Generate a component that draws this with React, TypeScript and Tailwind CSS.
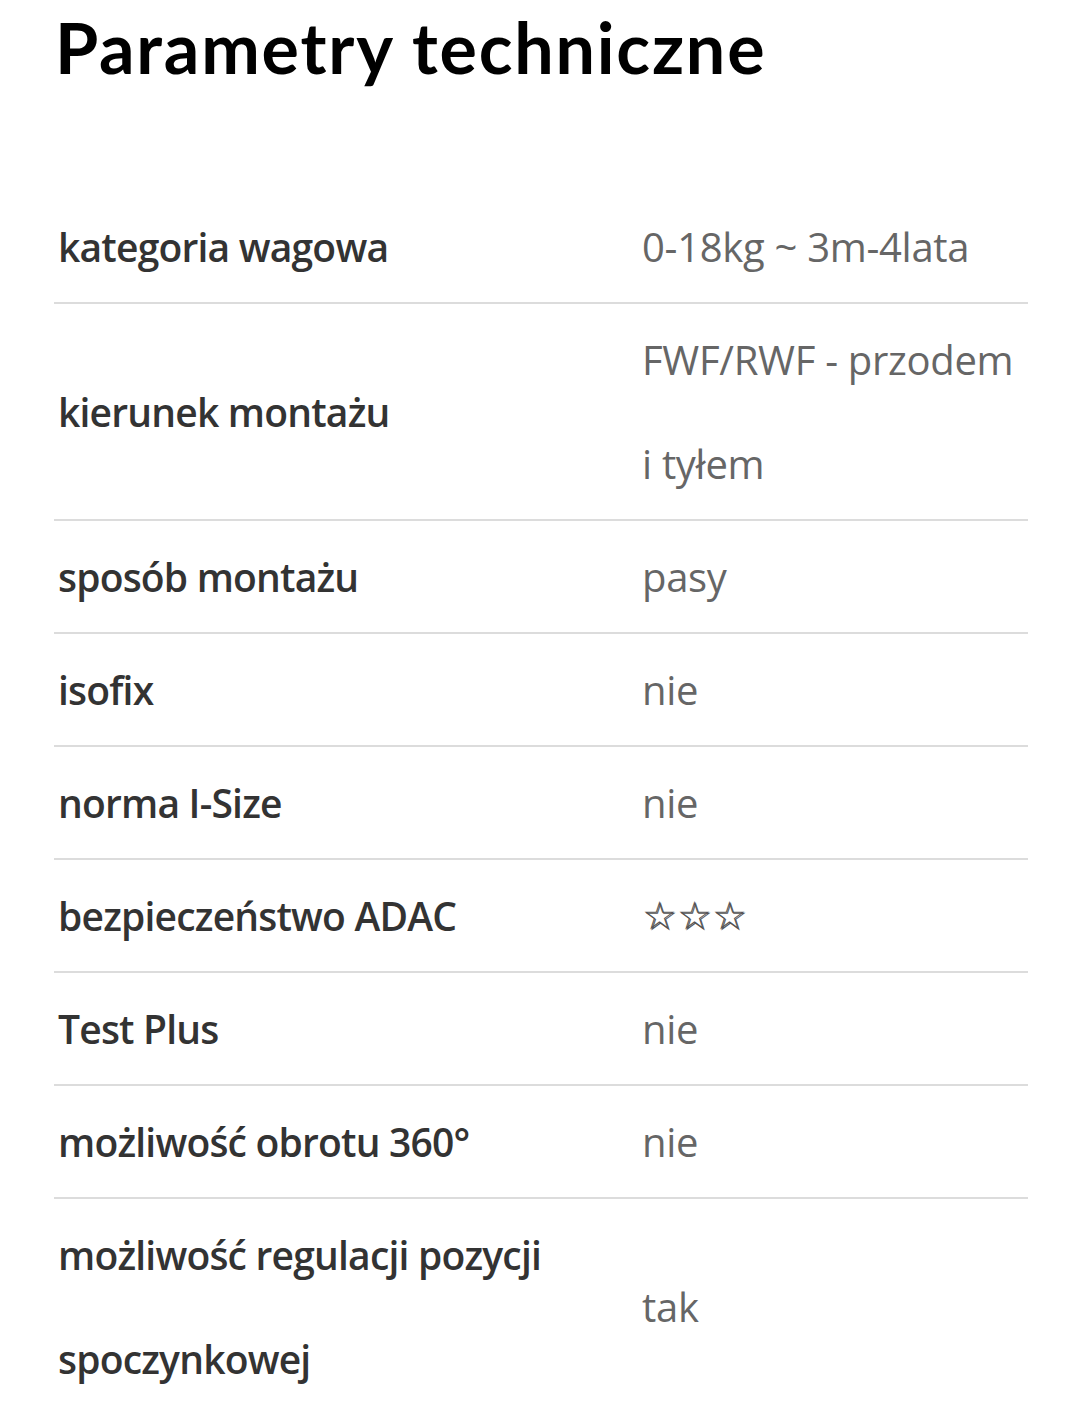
const specs: { label: string; value: string }[] = [
  { label: "kategoria wagowa", value: "0-18kg ~ 3m-4lata" },
  { label: "kierunek montażu", value: "FWF/RWF - przodem i tyłem" },
  { label: "sposób montażu", value: "pasy" },
  { label: "isofix", value: "nie" },
  { label: "norma I-Size", value: "nie" },
  { label: "bezpieczeństwo ADAC", value: "☆☆☆" },
  { label: "Test Plus", value: "nie" },
  { label: "możliwość obrotu 360°", value: "nie" },
  { label: "możliwość regulacji pozycji spoczynkowej", value: "tak" },
];

const SpecRow = ({ label, value, last }: { label: string; value: string; last: boolean }) => {
  const stars = value.startsWith("☆");
  return (
    <div
      className={`flex items-center py-[3.5px] ${last ? "" : "border-b-2 border-[#dcdcdc]"}`}
    >
      <div className="w-[584px] shrink-0 pl-[4px] pr-[20px] text-[39px] font-semibold tracking-[-0.8px] leading-[104px] text-[#333333]">
        {label}
      </div>
      <div
        className={`flex-1 pl-[4px] pr-[8px] leading-[104px] ${
          stars
            ? "text-[39px] text-[#555555] font-['DejaVu_Sans',sans-serif] [text-shadow:1px_1px_0_#555555]"
            : "text-[40px] tracking-[-0.3px] text-[#666666]"
        }`}
      >
        {value}
      </div>
    </div>
  );
};

export default function App() {
  return (
    <div className="min-h-[1409px] bg-white px-[54px] pt-[7px] font-['Open_Sans',sans-serif]">
      <h1 className="font-['Lato',sans-serif] text-[70px] font-bold leading-[80px] tracking-[1.8px] text-black pl-[1px]">
        Parametry techniczne
      </h1>
      <div className="mt-[104px] w-[974px]">
        {specs.map((s, i) => (
          <SpecRow key={s.label} {...s} last={i === specs.length - 1} />
        ))}
      </div>
    </div>
  );
}
